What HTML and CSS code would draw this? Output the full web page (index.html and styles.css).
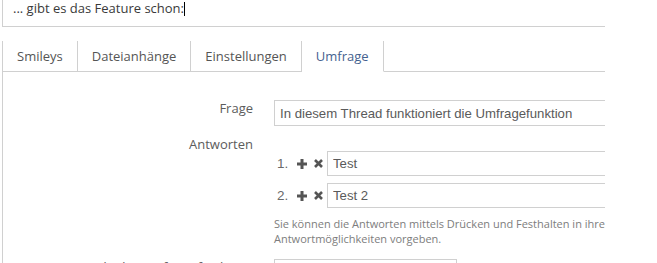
FILE: index.html
```html
<!DOCTYPE html>
<html lang="de">
<head>
  <meta charset="UTF-8"/>
  <title>Antwort verfassen</title>
  <link rel="stylesheet" href="styles.css">
</head>
<body>

  <div class="frame">
    <div class="form">

      <div class="editor">... gibt es das Feature schon:<span class="caret"></span></div>

      <ul class="tabs">
        <li class="tab">Smileys</li>
        <li class="tab">Dateianhänge</li>
        <li class="tab">Einstellungen</li>
        <li class="tab active">Umfrage</li>
        <li class="tab-fill"></li>
      </ul>

      <div class="panel">
        <dl class="fields">
          <dt>Frage</dt>
          <dd><input class="field" type="text" value="In diesem Thread funktioniert die Umfragefunktion"></dd>

          <dt>Antworten</dt>
          <dd class="answers">
            <ol class="answer-list">
              <li class="answer">
                <span class="num">1.</span>
                <svg class="icon" width="10" height="10" viewBox="0 0 10 10"><path d="M3.5 0h3v3.5H10v3H6.5V10h-3V6.5H0v-3h3.5z"/></svg>
                <svg class="icon icon-x" width="9" height="9" viewBox="0 0 9 9"><path d="M1 1l7 7M8 1L1 8"/></svg>
                <input class="field small" type="text" value="Test">
              </li>
              <li class="answer">
                <span class="num">2.</span>
                <svg class="icon" width="10" height="10" viewBox="0 0 10 10"><path d="M3.5 0h3v3.5H10v3H6.5V10h-3V6.5H0v-3h3.5z"/></svg>
                <svg class="icon icon-x" width="9" height="9" viewBox="0 0 9 9"><path d="M1 1l7 7M8 1L1 8"/></svg>
                <input class="field small" type="text" value="Test 2">
              </li>
            </ol>
            <p class="help">Sie können die Antworten mittels Drücken und Festhalten in ihrer Reihenfolge verändern. Sie können maximal 20<br>Antwortmöglichkeiten vorgeben.</p>
          </dd>

          <dt>Ende der Umfrage festlegen</dt>
          <dd><input class="field date" type="text" value=""></dd>
        </dl>
      </div>

    </div>
  </div>

</body>
</html>
```

FILE: styles.css
```css
* {
  box-sizing: border-box;
  margin: 0;
  padding: 0;
}

body {
  font-family: 'Open Sans', sans-serif;
  font-size: 13px;
  color: #555;
  background: #fff;
  height: 263px;
  overflow: hidden;
}

/* visible part of the form, cut at the right */
.frame {
  width: 603px;
  margin-left: 2px;
  overflow: hidden;
}

.form {
  width: 720px;
}

/* Editor (bottom part only) */
.editor {
  height: 27px;
  border: 1px solid #d0d0d0;
  border-top: 0;
  padding-left: 10px;
  line-height: 16px;
  color: #3a3a3a;
}

.caret {
  display: inline-block;
  width: 1px;
  height: 14px;
  background: #000;
  vertical-align: -3px;
}

/* Tabs */
.tabs {
  display: flex;
  list-style: none;
  margin-top: 14px;
}

.tab {
  padding: 0 14px;
  line-height: 30px;
  border-right: 1px solid #d0d0d0;
  border-bottom: 1px solid #d0d0d0;
  color: #555;
}

.tab:first-child {
  border-left: 1px solid #d0d0d0;
}

.tab.active {
  color: #45628f;
  border-bottom-color: transparent;
}

.tab-fill {
  flex: 1;
  border-bottom: 1px solid #d0d0d0;
}

/* Poll panel */
.panel {
  border-left: 1px solid #d0d0d0;
  padding-top: 28px;
}

.fields {
  display: grid;
  grid-template-columns: 250px 1fr;
  column-gap: 21px;
  row-gap: 10px;
}

.fields dt {
  text-align: right;
  line-height: 16px;
  color: #5c5c5c;
  white-space: nowrap;
}

.field {
  display: block;
  width: 100%;
  height: 26px;
  border: 1px solid #d0d0d0;
  padding: 0 5px;
  font-family: 'Liberation Sans', Arial, sans-serif;
  font-size: 13.2px;
  color: #5a5a5a;
  background: #fff;
  outline: none;
}

.field.small {
  height: 25px;
  flex: 1;
}

.field.date {
  width: 183px;
}

.answers {
  padding-top: 15px;
}

.answer-list {
  list-style: none;
  display: flex;
  flex-direction: column;
  gap: 7px;
}

.answer {
  display: flex;
  align-items: center;
  font-family: 'Liberation Sans', Arial, sans-serif;
  font-size: 13.5px;
  color: #6a6a6a;
}

.num {
  width: 20px;
  margin-left: 3px;
}

.icon {
  fill: #555;
  margin-right: 7px;
}

.icon-x {
  margin-right: 4px;
}

.icon-x path {
  fill: none;
  stroke: #555;
  stroke-width: 2.6;
}

.help {
  margin-top: 8px;
  margin-bottom: 3px;
  font-size: 11px;
  line-height: 15px;
  color: #7d7d7d;
  white-space: nowrap;
}
```
